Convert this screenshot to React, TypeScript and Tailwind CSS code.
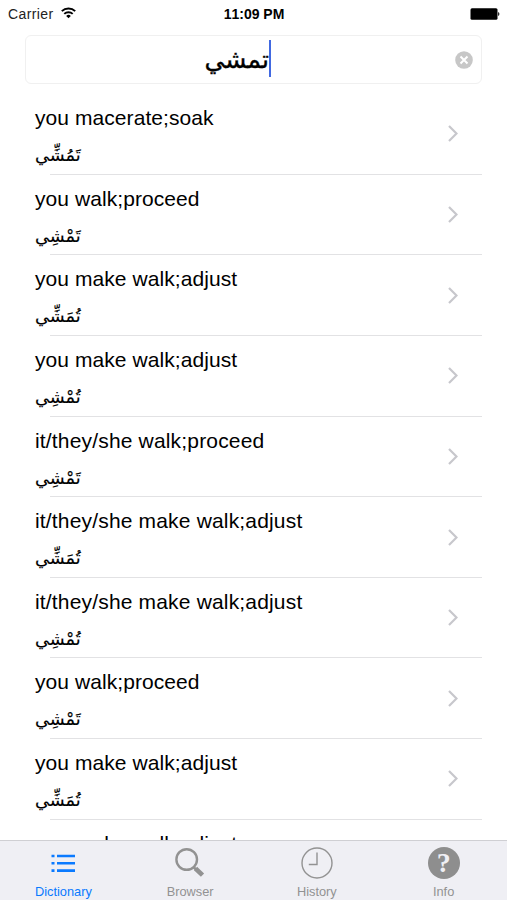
import React from 'react';
import clsx from 'clsx';

type Entry = { meaning: string; word: string };

const entries: Entry[] = [
  { meaning: 'you macerate;soak', word: 'تَمُشِّي' },
  { meaning: 'you walk;proceed', word: 'تَمْشِي' },
  { meaning: 'you make walk;adjust', word: 'تُمَشِّي' },
  { meaning: 'you make walk;adjust', word: 'تُمْشِي' },
  { meaning: 'it/they/she walk;proceed', word: 'تَمْشِي' },
  { meaning: 'it/they/she make walk;adjust', word: 'تُمَشِّي' },
  { meaning: 'it/they/she make walk;adjust', word: 'تُمْشِي' },
  { meaning: 'you walk;proceed', word: 'تَمْشِي' },
  { meaning: 'you make walk;adjust', word: 'تُمَشِّي' },
  { meaning: 'you make walk;adjust', word: '' },
];

const StatusBar: React.FC = () => (
  <header className="grid h-7 shrink-0 grid-cols-3 items-center pr-[7px] pl-2 leading-7">
    <div className="flex items-center gap-[7px]">
      <span className="text-[14px] tracking-[0.4px] text-[#222]">Carrier</span>
      <svg className="-mt-[2px]" width="15" height="12" viewBox="0 0 15 12" fill="none" stroke="#000" strokeWidth="1.9">
        <path d="M0.8 4.2a9.5 9.5 0 0 1 13.4 0" />
        <path d="M3.3 6.9a6 6 0 0 1 8.4 0" />
        <path d="M7.5 11.2 5.2 8.9a3.3 3.3 0 0 1 4.6 0Z" fill="#000" stroke="none" />
      </svg>
    </div>
    <span className="text-center text-[14px] font-bold whitespace-nowrap">11:09 PM</span>
    <svg className="justify-self-end" width="30" height="12" viewBox="0 0 30 12">
      <rect x="0.5" y="0.2" width="27" height="11.6" rx="1.5" />
      <path d="M28.2 4a2.3 2.3 0 0 1 0 4Z" />
    </svg>
  </header>
);

const SearchField: React.FC = () => (
  <div className="mx-[25px] mt-[7px] flex h-[49px] shrink-0 items-center rounded-[6px] border border-[#f0f0f0] pr-2">
    <div className="flex flex-1 items-center justify-end">
      <span
        dir="rtl"
        className="font-['DejaVu_Sans',sans-serif] text-[25px] leading-[44px] [-webkit-text-stroke:0.35px_#000]"
      >
        تمشي
      </span>
      <span className="mr-[184px] h-[37px] w-[2px] -translate-y-px bg-[#4169e1]" />
    </div>
    <svg width="18" height="18" viewBox="0 0 18 18">
      <circle cx="9" cy="9" r="8.8" fill="#c7c7c7" />
      <path d="M5.5 5.5l7 7M12.5 5.5l-7 7" stroke="#fff" strokeWidth="2" />
    </svg>
  </div>
);

const Row: React.FC<{ entry: Entry }> = ({ entry }) => (
  <li className="relative flex h-[80.65px] shrink-0 items-center justify-between pr-6 pl-[10px]">
    <div className="flex h-full flex-col items-start pt-[11px]">
      <span
        className={clsx(
          'text-[21px] leading-[26px] whitespace-nowrap',
          entry.meaning.startsWith('it/') ? 'tracking-[0.17px]' : 'tracking-[0.07px]'
        )}
      >
        {entry.meaning}
      </span>
      {entry.word && (
        <span
          dir="rtl"
          className="mt-[8px] font-['DejaVu_Sans',sans-serif] text-[17.7px] leading-[32px] [-webkit-text-stroke:0.15px_#000]"
        >
          {entry.word}
        </span>
      )}
    </div>
    <svg className="-mt-px" width="10" height="17" viewBox="0 0 10 17" fill="none" stroke="#c7c7cc" strokeWidth="2.2">
      <path d="M1 1l7.5 7.5L1 16" />
    </svg>
    <span className="absolute right-0 bottom-0 left-[25px] h-px bg-[#e2e2e4]" />
  </li>
);

const TabBar: React.FC = () => (
  <nav className="grid h-[60px] shrink-0 grid-cols-4 border-t border-[#cfcfd3] bg-[#efeff4] text-[12.8px] text-[#929292]">
    <div className="flex flex-col items-center text-[#0a7aff]">
      <svg className="mt-[5px]" width="34" height="34" viewBox="0 0 34 34" fill="currentColor">
        <path d="M5.5 8.7h3v2.6h-3zM11 8.7h18v2.6H11zM5.5 16h3v2.6h-3zM11 16h18v2.6H11zM5.5 23.3h3v2.6h-3zM11 23.3h18v2.6H11z" />
      </svg>
      <span className="mt-[4px] leading-4">Dictionary</span>
    </div>
    <div className="flex flex-col items-center">
      <svg className="mt-[5px]" width="34" height="34" viewBox="0 0 34 34" fill="none" stroke="currentColor">
        <circle cx="13.7" cy="13.5" r="10.3" strokeWidth="2.4" />
        <path d="M20.5 21l2.8 2.8" strokeWidth="2.5" />
        <path d="M22.5 22.5l7 6.7" strokeWidth="4.6" />
      </svg>
      <span className="mt-[4px] leading-4">Browser</span>
    </div>
    <div className="flex flex-col items-center">
      <svg className="mt-[5px]" width="34" height="34" viewBox="0 0 34 34" fill="none" stroke="currentColor" strokeWidth="1.4">
        <circle cx="17" cy="17" r="15" />
        <path d="M17 6.5v12H8.8" />
      </svg>
      <span className="mt-[4px] leading-4">History</span>
    </div>
    <div className="flex flex-col items-center">
      <div className="mt-[6px] flex h-8 w-8 items-center justify-center rounded-full bg-[#8e8e8e] font-['Liberation_Serif',serif] text-[28px] leading-8 font-bold text-[#efeff4]">
        ?
      </div>
      <span className="mt-[5px] leading-4">Info</span>
    </div>
  </nav>
);

const App: React.FC = () => {
  return (
    <div className="flex h-[900px] w-[507px] flex-col overflow-hidden bg-white font-['Liberation_Sans',Arial,sans-serif] text-black [font-kerning:none]">
      <StatusBar />
      <SearchField />
      <ul className="mx-[25px] mt-[10px] flex min-h-0 flex-1 flex-col overflow-hidden">
        {entries.map((entry, i) => (
          <Row key={i} entry={entry} />
        ))}
      </ul>
      <TabBar />
    </div>
  );
};

export default App;
